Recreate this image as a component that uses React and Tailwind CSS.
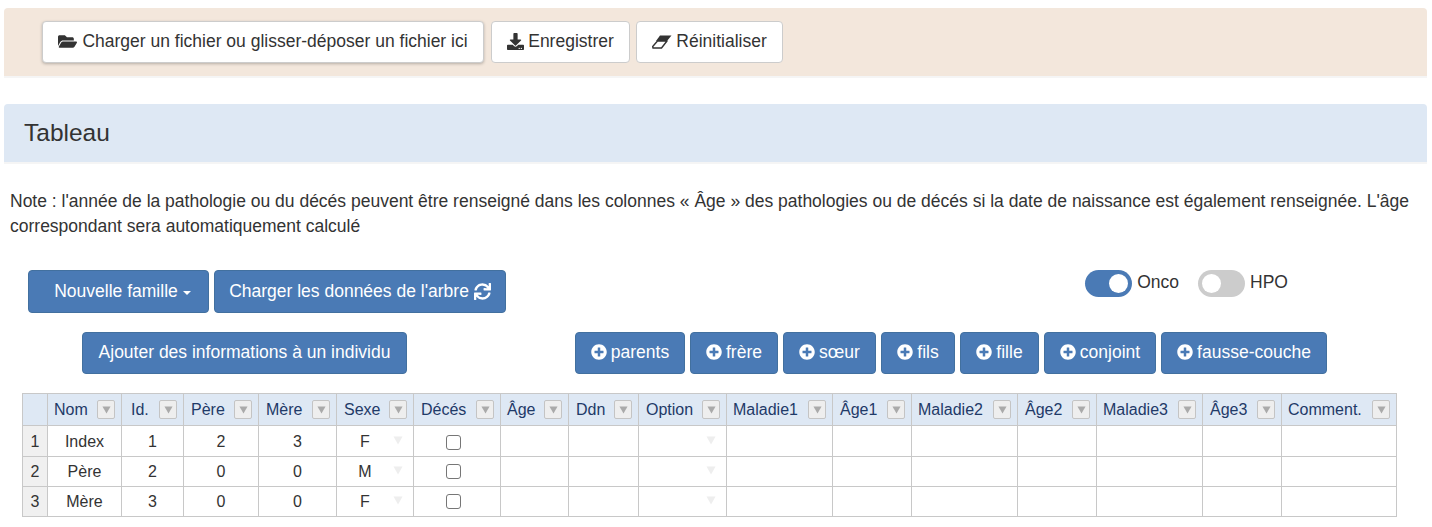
import React from "react";
import { FaFolderOpen, FaDownload, FaSync, FaPlusCircle } from "react-icons/fa";

const COLUMNS = [
  { name: "Nom", width: 74, pad: "pl-[6px]" },
  { name: "Id.", width: 62, pad: "pl-[9px]" },
  { name: "Père", width: 75, pad: "pl-[7px]" },
  { name: "Mère", width: 78, pad: "pl-[7px]" },
  { name: "Sexe", width: 77, pad: "pl-[7px]" },
  { name: "Décés", width: 87, pad: "pl-[7px]" },
  { name: "Âge", width: 68, pad: "pl-[6px]" },
  { name: "Ddn", width: 70, pad: "pl-[7px]" },
  { name: "Option", width: 88, pad: "pl-[7px]" },
  { name: "Maladie1", width: 106, pad: "pl-[6px]" },
  { name: "Âge1", width: 79, pad: "pl-[7px]" },
  { name: "Maladie2", width: 106, pad: "pl-[6px]" },
  { name: "Âge2", width: 79, pad: "pl-[7px]" },
  { name: "Maladie3", width: 106, pad: "pl-[6px]" },
  { name: "Âge3", width: 79, pad: "pl-[7px]" },
  { name: "Comment.", width: 115, pad: "pl-[6px]" },
];

const ROWS = [
  ["Index", "1", "2", "3", "F"],
  ["Père", "2", "0", "0", "M"],
  ["Mère", "3", "0", "0", "F"],
];

const ADD_BUTTONS = [
  { label: "parents", width: "w-[110px]" },
  { label: "frère", width: "w-[88px]" },
  { label: "sœur", width: "w-[93px]" },
  { label: "fils", width: "w-[74px]" },
  { label: "fille", width: "w-[79px]" },
  { label: "conjoint", width: "w-[112px]" },
  { label: "fausse-couche", width: "w-[166px]" },
];

const whiteBtn = "h-[42px] pb-[1px] flex items-center justify-center bg-white text-[#333] border border-[#ccc] rounded";
const blueBtn = "flex items-center justify-center bg-[#4a7ab5] text-white border border-[#42709f] rounded";

// petit triangle des listes
const Triangle = ({ className, w = 10, h = 9 }) => (
  <svg width={w} height={h} viewBox="0 0 10 9" preserveAspectRatio="none" className={className}>
    <polygon points="0.5,0.5 9.5,0.5 5,8.5" fill="currentColor" />
  </svg>
);

// gomme : moitié pleine, moitié contour
const Eraser = () => (
  <svg width="20" height="14" viewBox="0 0 20 14">
    <polygon points="5.5,6 15,6 9.5,13 1,13 0.7,11.5" fill="#fff" stroke="#333" strokeWidth="1.4" strokeLinejoin="round" />
    <polygon points="8,0.5 19.5,0.5 15,6 4,6" fill="#333" />
  </svg>
);

const Toggle = ({ on, label }) => (
  <div className="flex items-center gap-[5px]">
    <div className={`w-[47px] h-[27px] rounded-full flex items-center px-[4px] ${on ? "bg-[#4a7ab5] justify-end" : "bg-[#ccc] justify-start"}`}>
      <div className="w-[19px] h-[19px] rounded-full bg-white" />
    </div>
    <span className="relative top-[-1px]">{label}</span>
  </div>
);

const HeaderCell = ({ name, width, pad }) => (
  <th
    style={{ width }}
    className="border border-[#c8c8c8] bg-[#dee8f4] font-normal text-[#1f3a68] p-0 h-[32px]"
  >
    <div className={`flex items-center justify-between pr-[6px] ${pad}`}>
      <span className="pt-[1px]">{name}</span>
      <span className="w-[18px] h-[19px] flex items-center justify-center bg-[#eee] border border-[#c4c4c4] rounded-[2px] text-[#aaa]">
        <Triangle w={9} h={8} />
      </span>
    </div>
  </th>
);

export default function App() {
  return (
    <div className="w-[1432px] h-[527px] overflow-hidden bg-white text-[17.5px] text-[#333] font-['Liberation_Sans',Arial,sans-serif] pt-[8px] px-[4px]">
      <div className="w-[1423px] h-[70px] bg-[#f3e7dc] rounded-t border-b-2 border-[#f5f5f5] pt-[13px] pl-[38px] flex gap-[7px]">
        <button className={`${whiteBtn} w-[442px] gap-[5px] shadow-[0_1px_3px_rgba(0,0,0,0.25)]`}>
          <FaFolderOpen className="text-[19px] text-[#333]" />
          Charger un fichier ou glisser-déposer un fichier ici
        </button>
        <button className={`${whiteBtn} w-[139px] gap-[4px]`}>
          <FaDownload className="text-[17px]" />
          Enregistrer
        </button>
        <button className={`${whiteBtn} w-[147px] ml-[-1px] gap-[4px]`}>
          <Eraser />
          Réinitialiser
        </button>
      </div>

      <div className="mt-[26px] w-[1423px] h-[60px] bg-[#dee8f4] rounded-t border-b-2 border-[#f5f5f5] flex items-center pl-[20px]">
        <h2 className="text-[24.5px] text-[#333] font-normal">Tableau</h2>
      </div>

      <p className="mt-[25px] ml-[6px] w-[1410px] leading-[25px]">
        Note : l'année de la pathologie ou du décés peuvent être renseigné dans les colonnes « Âge » des pathologies ou de décés si la date de naissance est également renseignée. L'âge correspondant sera automatiquement calculé
      </p>

      <div className="mt-[31px] flex items-start justify-between">
        <div className="ml-[24px] flex gap-[5px]">
          <button className={`${blueBtn} w-[181px] h-[43px] pl-[8px] gap-[5px]`}>
            Nouvelle famille
            <span className="w-0 h-0 border-x-[4px] border-x-transparent border-t-[4px] border-t-white mt-[2px]" />
          </button>
          <button className={`${blueBtn} w-[292px] h-[43px] gap-[5px]`}>
            Charger les données de l'arbre
            <FaSync className="text-[17px]" />
          </button>
        </div>
        <div className="mr-[140px] flex gap-[19px]">
          <Toggle on label="Onco" />
          <Toggle label="HPO" />
        </div>
      </div>

      <div className="mt-[19px] flex">
        <button className={`${blueBtn} ml-[78px] w-[325px] h-[42px] pb-[2px]`}>
          Ajouter des informations à un individu
        </button>
        <div className="ml-[168px] flex gap-[5px]">
          {ADD_BUTTONS.map((b) => (
            <button key={b.label} className={`${blueBtn} ${b.width} h-[42px] pb-[2px] gap-[4px]`}>
              <FaPlusCircle className="text-[16px]" />
              {b.label}
            </button>
          ))}
        </div>
      </div>

      <table className="mt-[19px] ml-[18px] border-collapse table-fixed w-[1375px] text-[16px] text-[#333]">
        <thead>
          <tr>
            <th className="w-[25px] border border-[#c8c8c8] bg-[#dee8f4] p-0" />
            {COLUMNS.map((c) => (
              <HeaderCell key={c.name} name={c.name} width={c.width} pad={c.pad} />
            ))}
          </tr>
        </thead>
        <tbody>
          {ROWS.map((row, i) => (
            <tr key={i} className={i === 0 ? "h-[31px]" : "h-[30px]"}>
              <td className={`border border-[#c8c8c8] bg-[#f0f0f0] text-center p-0 ${i === 0 ? "pt-[2px]" : ""}`}>{i + 1}</td>
              {COLUMNS.map((c, j) => (
                <td key={c.name} className={`border border-[#c8c8c8] text-center p-0 ${i === 0 ? "pt-[2px]" : ""}`}>
                  {j < 4 && row[j]}
                  {j === 4 && (
                    <div className="flex items-center pl-[20px] pr-[10px] justify-between">
                      <span className="w-[16px] text-center">{row[4]}</span>
                      <Triangle className="text-[#eee] mb-[3px]" />
                    </div>
                  )}
                  {j === 5 && <input type="checkbox" readOnly className="w-[15px] h-[15px] align-middle mt-[-1px] ml-[-8px] appearance-none border-[1.5px] border-[#767676] rounded-[3px] bg-white" />}
                  {j === 8 && (
                    <div className="flex justify-end pr-[10px]">
                      <Triangle className="text-[#eee] mb-[3px]" />
                    </div>
                  )}
                </td>
              ))}
            </tr>
          ))}
        </tbody>
      </table>
    </div>
  );
}
